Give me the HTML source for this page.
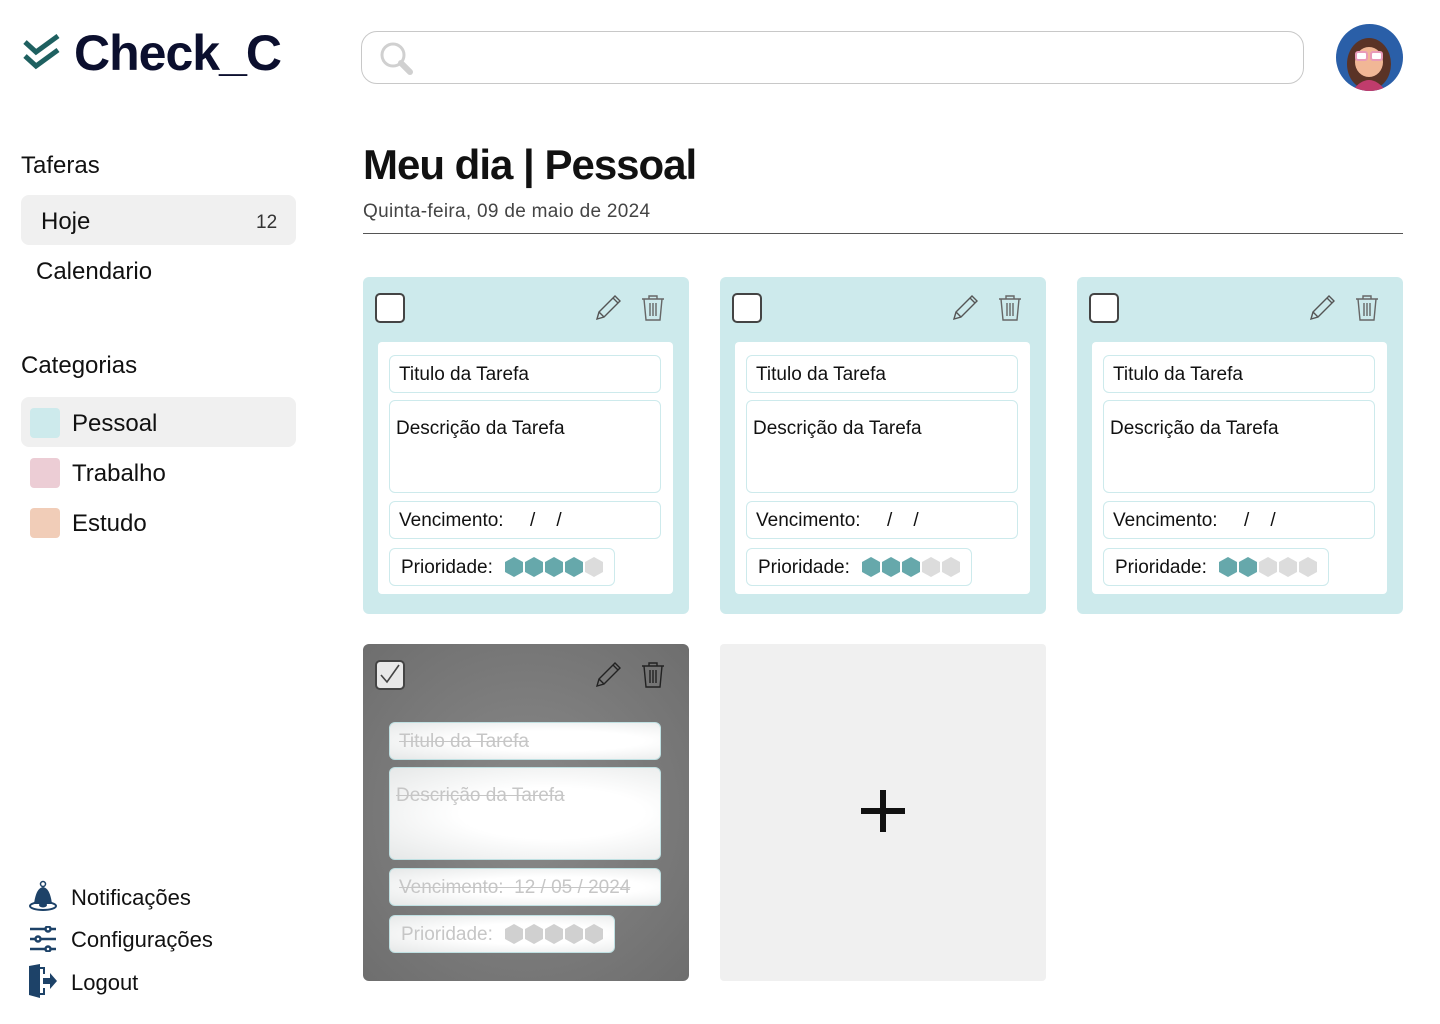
<!DOCTYPE html>
<html><head><meta charset="utf-8"><style>
*{margin:0;padding:0;box-sizing:border-box}
body{width:1440px;height:1024px;background:#fff;font-family:"Liberation Sans","DejaVu Sans",sans-serif;position:relative;overflow:hidden;color:#111}
.a{position:absolute}
.logo{left:74px;top:24px;font-size:50px;font-weight:bold;color:#0b0f2e;letter-spacing:-1px}
.search{left:361px;top:31px;width:943px;height:53px;border:1px solid #c8c8c8;border-radius:16px}
.side{font-size:24px}
.card{position:absolute;width:326px;height:337px;background:#cdeaec;border-radius:6px}
.card .inner{position:absolute;left:15px;top:65px;width:295px;height:252px;background:#fff;border-radius:4px}
.f{position:absolute;left:26px;width:272px;border:1px solid #cdeaec;border-radius:6px;background:#fff;font-size:19px;padding-left:9px;line-height:38px}
.cb{position:absolute;left:12px;top:16px;width:30px;height:30px;border:2.5px solid #444;border-radius:5px;background:#fff}
.ic{position:absolute;top:17px}
.done{background:radial-gradient(ellipse at center,#8a8a8a 0%,#6e6e6e 100%)}
.done .f{background:radial-gradient(ellipse at 60% 50%,#fff 40%,#e6e8e8 100%);color:#c6c6c6;text-decoration:line-through;border-color:#bfe0e2}
</style></head><body>
<svg class="a" style="left:22px;top:34px" width="40" height="38" viewBox="0 0 40 38"><path d="M3 8 L14 18 L36 2" fill="none" stroke="#1e6060" stroke-width="5"/><path d="M3 22 L14 32 L36 16" fill="none" stroke="#1e6060" stroke-width="5"/></svg>
<div class="a logo">Check_C</div>
<div class="a search"><svg class="a" style="left:16px;top:8px" width="38" height="38" viewBox="0 0 38 38"><circle cx="15" cy="15" r="11" fill="none" stroke="#d0d0d0" stroke-width="3"/><path d="M23 23 L32 32" stroke="#d0d0d0" stroke-width="6" stroke-linecap="round"/></svg></div>
<svg class="a" style="left:1336px;top:24px" width="67" height="67" viewBox="0 0 67 67"><defs><clipPath id="c"><circle cx="33.5" cy="33.5" r="33.5"/></clipPath></defs><g clip-path="url(#c)"><rect width="67" height="67" fill="#2a5fa8"/><ellipse cx="33" cy="40" rx="22" ry="26" fill="#5a3326"/><ellipse cx="33" cy="38" rx="14" ry="15" fill="#f1b796"/><rect x="20" y="28" width="11" height="8" rx="2" fill="#fff" stroke="#e99ab8" stroke-width="2"/><rect x="35" y="28" width="11" height="8" rx="2" fill="#fff" stroke="#e99ab8" stroke-width="2"/><path d="M16 67 Q33 45 50 67Z" fill="#c03c6c"/></g></svg>

<div class="a side" style="left:21px;top:152px">Taferas</div>
<div class="a" style="left:21px;top:195px;width:275px;height:50px;background:#f0f0f0;border-radius:8px"></div>
<div class="a side" style="left:41px;top:208px">Hoje</div>
<div class="a" style="left:256px;top:212px;font-size:19px;color:#333">12</div>
<div class="a side" style="left:36px;top:258px">Calendario</div>
<div class="a side" style="left:21px;top:352px">Categorias</div>
<div class="a" style="left:21px;top:397px;width:275px;height:50px;background:#f0f0f0;border-radius:8px"></div>
<div class="a" style="left:30px;top:408px;width:30px;height:30px;background:#cdeaec;border-radius:4px"></div>
<div class="a side" style="left:72px;top:410px">Pessoal</div>
<div class="a" style="left:30px;top:458px;width:30px;height:30px;background:#eccdd5;border-radius:4px"></div>
<div class="a side" style="left:72px;top:460px">Trabalho</div>
<div class="a" style="left:30px;top:508px;width:30px;height:30px;background:#f1cdb8;border-radius:4px"></div>
<div class="a side" style="left:72px;top:510px">Estudo</div>

<svg class="a" style="left:28px;top:880px" width="30" height="34" viewBox="0 0 30 34"><circle cx="15" cy="4" r="2.5" fill="none" stroke="#1d4268" stroke-width="1.5"/><path d="M6 24 Q8 8 15 7 Q22 8 24 24Z" fill="#1d4268"/><ellipse cx="15" cy="26" rx="13" ry="4" fill="none" stroke="#1d4268" stroke-width="2"/><ellipse cx="15" cy="25" rx="4" ry="2.5" fill="#1d4268"/></svg>
<div class="a side" style="left:71px;top:885px;font-size:22px">Notificações</div>
<svg class="a" style="left:29px;top:926px" width="28" height="26" viewBox="0 0 28 26"><g stroke="#1d4268" stroke-width="2.5" fill="#fff"><line x1="1" y1="3" x2="27" y2="3"/><line x1="1" y1="13" x2="27" y2="13"/><line x1="1" y1="23" x2="27" y2="23"/><circle cx="19" cy="3" r="2.5"/><circle cx="9" cy="13" r="2.5"/><circle cx="19" cy="23" r="2.5"/></g></svg>
<div class="a side" style="left:71px;top:927px;font-size:22px">Configurações</div>
<svg class="a" style="left:28px;top:964px" width="30" height="34" viewBox="0 0 30 34"><path d="M1 2 L12 0 L12 34 L1 31Z" fill="#1d4268"/><path d="M12 4 H16 V10 M12 30 H16 V24" fill="none" stroke="#1d4268" stroke-width="2"/><path d="M15 14 H22 V9 L29 17 L22 25 V20 H15Z" fill="#1d4268"/></svg>
<div class="a side" style="left:71px;top:970px;font-size:22px">Logout</div>

<div class="a" style="left:363px;top:141px;font-size:42px;font-weight:bold;letter-spacing:-1px">Meu dia | Pessoal</div>
<div class="a" style="left:363px;top:201px;font-size:19px;color:#444;letter-spacing:0.3px">Quinta-feira, 09 de maio de 2024</div>
<div class="a" style="left:363px;top:233px;width:1040px;height:1px;background:#555"></div>

<div class="card" style="left:363px;top:277px">
<div class="cb"></div>
<svg class="ic" style="left:231px" width="28" height="28" viewBox="0 0 28 28"><path d="M3 25 L5 18 L21 2 L26 7 L10 23Z M5 18 L10 23 M19 4 L24 9" fill="none" stroke="#555" stroke-width="1.4"/></svg>
<svg class="ic" style="left:278px" width="24" height="28" viewBox="0 0 24 28"><path d="M1 5 H23 M8 5 V2 H16 V5 M3 5 L5 26 H19 L21 5 M9 9 V22 M12 9 V22 M15 9 V22" fill="none" stroke="#666" stroke-width="1.4"/></svg>
<div class="inner"></div>
<div class="f" style="top:78px;height:38px">Titulo da Tarefa</div>
<div class="f" style="top:123px;height:93px;padding-left:6px;line-height:30px;padding-top:13px">Descrição da Tarefa</div>
<div class="f" style="top:224px;height:38px">Vencimento: &nbsp;&nbsp;&nbsp;&nbsp;/ &nbsp;&nbsp;&nbsp;/</div>
<div class="f" style="top:271px;height:38px;width:226px;padding-left:11px">Prioridade: <svg style="vertical-align:-5px;margin-left:6px" width="100" height="22" viewBox="0 0 100 22"><path d="M10 1 L19 6 L19 16 L10 21 L1 16 L1 6Z" fill="#66a8ab"/><path d="M30 1 L39 6 L39 16 L30 21 L21 16 L21 6Z" fill="#66a8ab"/><path d="M50 1 L59 6 L59 16 L50 21 L41 16 L41 6Z" fill="#66a8ab"/><path d="M70 1 L79 6 L79 16 L70 21 L61 16 L61 6Z" fill="#66a8ab"/><path d="M90 1 L99 6 L99 16 L90 21 L81 16 L81 6Z" fill="#dcdcdc"/></svg></div>
</div>

<div class="card" style="left:720px;top:277px">
<div class="cb"></div>
<svg class="ic" style="left:231px" width="28" height="28" viewBox="0 0 28 28"><path d="M3 25 L5 18 L21 2 L26 7 L10 23Z M5 18 L10 23 M19 4 L24 9" fill="none" stroke="#555" stroke-width="1.4"/></svg>
<svg class="ic" style="left:278px" width="24" height="28" viewBox="0 0 24 28"><path d="M1 5 H23 M8 5 V2 H16 V5 M3 5 L5 26 H19 L21 5 M9 9 V22 M12 9 V22 M15 9 V22" fill="none" stroke="#666" stroke-width="1.4"/></svg>
<div class="inner"></div>
<div class="f" style="top:78px;height:38px">Titulo da Tarefa</div>
<div class="f" style="top:123px;height:93px;padding-left:6px;line-height:30px;padding-top:13px">Descrição da Tarefa</div>
<div class="f" style="top:224px;height:38px">Vencimento: &nbsp;&nbsp;&nbsp;&nbsp;/ &nbsp;&nbsp;&nbsp;/</div>
<div class="f" style="top:271px;height:38px;width:226px;padding-left:11px">Prioridade: <svg style="vertical-align:-5px;margin-left:6px" width="100" height="22" viewBox="0 0 100 22"><path d="M10 1 L19 6 L19 16 L10 21 L1 16 L1 6Z" fill="#66a8ab"/><path d="M30 1 L39 6 L39 16 L30 21 L21 16 L21 6Z" fill="#66a8ab"/><path d="M50 1 L59 6 L59 16 L50 21 L41 16 L41 6Z" fill="#66a8ab"/><path d="M70 1 L79 6 L79 16 L70 21 L61 16 L61 6Z" fill="#dcdcdc"/><path d="M90 1 L99 6 L99 16 L90 21 L81 16 L81 6Z" fill="#dcdcdc"/></svg></div>
</div>

<div class="card" style="left:1077px;top:277px">
<div class="cb"></div>
<svg class="ic" style="left:231px" width="28" height="28" viewBox="0 0 28 28"><path d="M3 25 L5 18 L21 2 L26 7 L10 23Z M5 18 L10 23 M19 4 L24 9" fill="none" stroke="#555" stroke-width="1.4"/></svg>
<svg class="ic" style="left:278px" width="24" height="28" viewBox="0 0 24 28"><path d="M1 5 H23 M8 5 V2 H16 V5 M3 5 L5 26 H19 L21 5 M9 9 V22 M12 9 V22 M15 9 V22" fill="none" stroke="#666" stroke-width="1.4"/></svg>
<div class="inner"></div>
<div class="f" style="top:78px;height:38px">Titulo da Tarefa</div>
<div class="f" style="top:123px;height:93px;padding-left:6px;line-height:30px;padding-top:13px">Descrição da Tarefa</div>
<div class="f" style="top:224px;height:38px">Vencimento: &nbsp;&nbsp;&nbsp;&nbsp;/ &nbsp;&nbsp;&nbsp;/</div>
<div class="f" style="top:271px;height:38px;width:226px;padding-left:11px">Prioridade: <svg style="vertical-align:-5px;margin-left:6px" width="100" height="22" viewBox="0 0 100 22"><path d="M10 1 L19 6 L19 16 L10 21 L1 16 L1 6Z" fill="#66a8ab"/><path d="M30 1 L39 6 L39 16 L30 21 L21 16 L21 6Z" fill="#66a8ab"/><path d="M50 1 L59 6 L59 16 L50 21 L41 16 L41 6Z" fill="#dcdcdc"/><path d="M70 1 L79 6 L79 16 L70 21 L61 16 L61 6Z" fill="#dcdcdc"/><path d="M90 1 L99 6 L99 16 L90 21 L81 16 L81 6Z" fill="#dcdcdc"/></svg></div>
</div>

<div class="card done" style="left:363px;top:644px">
<div class="cb" style="background:#e8e8e8"><svg width="26" height="26" viewBox="0 0 26 26" style="position:absolute;left:0;top:0"><path d="M4 13 L10 20 L22 3" fill="none" stroke="#444" stroke-width="1.6"/></svg></div>
<svg class="ic" style="left:231px" width="28" height="28" viewBox="0 0 28 28"><path d="M3 25 L5 18 L21 2 L26 7 L10 23Z M5 18 L10 23 M19 4 L24 9" fill="none" stroke="#222" stroke-width="1.4"/></svg>
<svg class="ic" style="left:278px" width="24" height="28" viewBox="0 0 24 28"><path d="M1 5 H23 M8 5 V2 H16 V5 M3 5 L5 26 H19 L21 5 M9 9 V22 M12 9 V22 M15 9 V22" fill="none" stroke="#222" stroke-width="1.4"/></svg>
<div class="f" style="top:78px;height:38px">Titulo da Tarefa</div>
<div class="f" style="top:123px;height:93px;padding-left:6px;line-height:30px;padding-top:13px">Descrição da Tarefa</div>
<div class="f" style="top:224px;height:38px">Vencimento: &nbsp;12 / 05 / 2024</div>
<div class="f" style="top:271px;height:38px;width:226px;padding-left:11px;text-decoration:none">Prioridade: <svg style="vertical-align:-5px;margin-left:6px" width="100" height="22" viewBox="0 0 100 22"><g fill="#d0d0d0"><path d="M10 1 L19 6 L19 16 L10 21 L1 16 L1 6Z"/><path d="M30 1 L39 6 L39 16 L30 21 L21 16 L21 6Z"/><path d="M50 1 L59 6 L59 16 L50 21 L41 16 L41 6Z"/><path d="M70 1 L79 6 L79 16 L70 21 L61 16 L61 6Z"/><path d="M90 1 L99 6 L99 16 L90 21 L81 16 L81 6Z"/></g></svg></div>
</div>

<div class="a" style="left:720px;top:644px;width:326px;height:337px;background:#f0f0f0;border-radius:4px"></div>
<div class="a" style="left:861px;top:808px;width:44px;height:6px;background:#111"></div>
<div class="a" style="left:880px;top:790px;width:6px;height:42px;background:#111"></div>
</body></html>
